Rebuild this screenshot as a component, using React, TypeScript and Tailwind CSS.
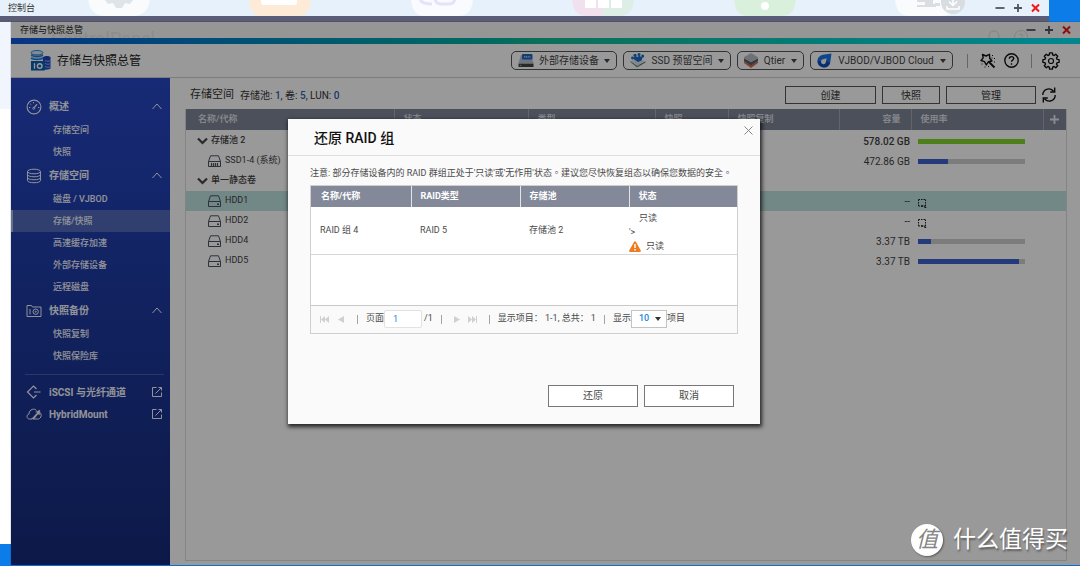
import React from 'react';

type Volume = {
  name: string;
  kind: 'group' | 'ssd' | 'hdd';
  capacity?: string;
  used?: number;
  color?: string;
  loading?: boolean;
  selected?: boolean;
};

const volumes: Volume[] = [
  { name: '存储池 2', kind: 'group', capacity: '578.02 GB', used: 100, color: '#80d62c' },
  { name: 'SSD1-4 (系统)', kind: 'ssd', capacity: '472.86 GB', used: 28, color: '#3f62cc' },
  { name: '单一静态卷', kind: 'group' },
  { name: 'HDD1', kind: 'hdd', capacity: '--', loading: true, selected: true },
  { name: 'HDD2', kind: 'hdd', capacity: '--', loading: true },
  { name: 'HDD4', kind: 'hdd', capacity: '3.37 TB', used: 12, color: '#3f62cc' },
  { name: 'HDD5', kind: 'hdd', capacity: '3.37 TB', used: 94, color: '#3f62cc' },
];

function WindowControls() {
  return (
    <div className="flex items-center gap-2">
      <button aria-label="最小化" className="text-[#50565e]">
        <svg width="10" height="10" viewBox="0 0 10 10" stroke="currentColor" strokeWidth="1.8"><path d="M0.5 5h9" /></svg>
      </button>
      <button aria-label="最大化" className="text-[#50565e]">
        <svg width="10" height="10" viewBox="0 0 10 10" stroke="currentColor" strokeWidth="1.8"><path d="M1 5h8M5 1v8" /></svg>
      </button>
      <button aria-label="关闭" className="text-[#f01818]">
        <svg width="9" height="10" viewBox="0 0 9 10" stroke="currentColor" strokeWidth="2"><path d="M1 1.5l7 7M8 1.5l-7 7" /></svg>
      </button>
    </div>
  );
}

function Caret() {
  return (
    <svg width="6" height="4" viewBox="0 0 6 4" fill="currentColor"><path d="M0 0h6L3 4z" /></svg>
  );
}

function LogoIcon() {
  return (
    <svg width="21" height="21" viewBox="0 0 21 21">
      <path d="M1 3v7h12V3z" fill="#a9cdf0" />
      <path d="M1 5c3 2 9 2 12 0M1 8c3 2 9 2 12 0" stroke="#2477d4" strokeWidth="1.4" fill="none" />
      <ellipse cx="7" cy="2.7" rx="6" ry="2.2" fill="#d5e9fa" stroke="#2d86e0" strokeWidth="1" />
      <path d="M13 7c2-1.500 6-1.500 7.500 0v11.500c-2 1.500-6 1.500-7.500 0z" fill="#2145bd" />
      <path d="M15 10.500c2 1 4 1 5.500 0M15 13.500c2 1 4 1 5.500 0M15 16.500c2 1 4 1 5.500 0" stroke="#8fb7f0" strokeWidth="1" fill="none" />
      <rect x="1" y="11" width="14" height="9.500" fill="#0d62b5" />
      <path d="M4.500 13.200v5.500" stroke="#fff" strokeWidth="1.300" />
      <circle cx="9.700" cy="16" r="2.300" fill="none" stroke="#fff" strokeWidth="1.400" />
    </svg>
  );
}

function RaidIcon() {
  return (
    <svg width="16" height="14" viewBox="0 0 16 14">
      <path d="M3 1h10l2.500 8H.5z" fill="#b8c4d2" />
      <rect x="4" y="0" width="10.500" height="5.500" rx="1" fill="#2467bd" />
      <path d="M6 2.800h6.500" stroke="#b9d5f7" strokeWidth="1.200" strokeDasharray="1.300 .5" />
      <path d="M.5 9.500h15v3.500H.5z" fill="#3e444b" />
      <circle cx="2.500" cy="11.500" r=".8" fill="#82d030" />
    </svg>
  );
}

function SsdIcon() {
  return (
    <svg width="16" height="15" viewBox="0 0 16 15">
      <path d="M.5 9L7 14.500 15.500 9.500V8.300L7 12.800.5 8z" fill="#6d7785" />
      <path d="M1 8l5-2 9.500 2L7 12.500z" fill="#d8e4ee" />
      <circle cx="2.500" cy="5" r="1.400" fill="#1c6cc4" />
      <circle cx="5" cy="2.200" r="1.500" fill="#1c6cc4" />
      <circle cx="9" cy="1.500" r="1.500" fill="#1c6cc4" />
      <circle cx="12.700" cy="3" r="1.500" fill="#1c6cc4" />
      <path d="M3 5.500L5 3l3 1 1-2 2 2 2-.5-1.500 4L8 9 5 7z" fill="#1c6cc4" />
      <path d="M7 13.500l2.500-1.300" stroke="#77cc35" strokeWidth="1" />
    </svg>
  );
}

function QtierIcon() {
  return (
    <svg width="14" height="15" viewBox="0 0 14 15">
      <path d="M0 8.500L7 12l7-3.500V10l-7 5-7-5z" fill="#e0694f" />
      <path d="M0 5.300L7 9l7-3.700v3L7 12.500 0 8.300z" fill="#59616b" />
      <path d="M0 4.300L7 0l7 4.300v1L7 9 0 5.300z" fill="#b8bec4" />
    </svg>
  );
}

function CloudDropIcon() {
  return (
    <svg width="15" height="15" viewBox="0 0 15 15">
      <path d="M14.500.5L13.300 9A6.500 6.500 0 1 1 6 1.800z" fill="#1976e8" />
      <path d="M.7 8A6.500 6.500 0 0 0 13.200 10L9 8z" fill="#124bb2" />
      <path d="M9.500 5.200l-.6 4A2.500 2.500 0 1 1 6 6.200z" fill="#f3f7fc" />
    </svg>
  );
}

const gearPath = (() => {
  const teeth = 8;
  const points: string[] = [];
  for (let i = 0; i < teeth; i++) {
    const base = (i / teeth) * Math.PI * 2 - Math.PI / 2;
    [[-0.27, 6.3], [-0.17, 8.2], [0.17, 8.2], [0.27, 6.3]].forEach(([offset, radius]) => {
      points.push(`${(9 + radius * Math.cos(base + offset)).toFixed(2)} ${(9 + radius * Math.sin(base + offset)).toFixed(2)}`);
    });
  }
  return `M${points.join('L')}Z`;
})();

function WandIcon() {
  return (
    <svg width="16" height="16" viewBox="0 0 16 16" fill="none" stroke="currentColor" strokeWidth="1.400" strokeLinejoin="round">
      <path d="M2.500 1.500L6 3l3.500-1.700.2 3.900L12 8 8.300 8.800 6.300 12 4.500 8.700 1 7.500l2.200-2.600z" />
      <path d="M9 9l5.500 5.500" strokeWidth="1.800" />
      <path d="M12 2.500h1M14 5.500h1M14 9h1M11.500 5h1M1.500 11h1M4.500 14h1M8 13.500h1" strokeWidth="1" />
    </svg>
  );
}

const tools = [
  { label: '外部存储设备', icon: <RaidIcon />, width: 'w-[106px]' },
  { label: 'SSD 预留空间', icon: <SsdIcon />, width: 'w-[108px]' },
  { label: 'Qtier', icon: <QtierIcon />, width: 'w-[67px]' },
  { label: 'VJBOD/VJBOD Cloud', icon: <CloudDropIcon />, width: 'w-[143px]' },
];

function GaugeIcon() {
  return (
    <svg width="16" height="16" viewBox="0 0 16 16" fill="none" stroke="currentColor">
      <circle cx="8" cy="8" r="6.900" strokeWidth="1.100" />
      <path d="M8.300 8.500l2.700-3.300" strokeWidth="1.200" />
      <circle cx="7.700" cy="9.300" r="1" />
      <path d="M3 8.500h1.300M4.300 5l1 .8M7.500 3v1.300M12 8.500h1.300" />
    </svg>
  );
}

function DiskStackIcon() {
  return (
    <svg width="16" height="16" viewBox="0 0 16 16" fill="none" stroke="currentColor">
      <ellipse cx="8" cy="3.500" rx="6.500" ry="2.300" />
      <path d="M1.500 3.500v9c0 3 13 3 13 0v-9M1.500 6.500c0 3 13 3 13 0M1.500 9.500c0 3 13 3 13 0" />
    </svg>
  );
}

function SnapshotIcon() {
  return (
    <svg width="16" height="14" viewBox="0 0 16 14" fill="none" stroke="currentColor">
      <path d="M1 3V1.500h4.500L6.500 3h8.500v9.500H1zM4 5v5.500" />
      <circle cx="9.700" cy="7.700" r="2.700" />
      <circle cx="9.700" cy="7.700" r=".6" />
    </svg>
  );
}

function IscsiIcon() {
  return (
    <svg width="16" height="14" viewBox="0 0 16 14" fill="none" stroke="currentColor" strokeWidth="1.200">
      <path d="M10.500 4L7.500 1 1.500 7l6 6 3-3M8 7h6.500" />
    </svg>
  );
}

function HybridIcon() {
  return (
    <svg width="16" height="12" viewBox="0 0 16 12" fill="none" stroke="currentColor">
      <path d="M6 11H3.500C.3 11 .3 6.500 3 6 3 1 9 0 10.500 2.500" />
      <path d="M12.500 3.500C15 4.500 15.800 7 14.800 9c-.7 1.600-1.800 2-3.300 2H7" />
      <path d="M5.500 11l6-6.500-2-.5 4.500-2-.5 5-1.500-1-4 5z" fill="currentColor" strokeWidth=".3" />
    </svg>
  );
}

type Group = { label: string; icon: React.ReactNode; items: string[] };

const groups: Group[] = [
  { label: '概述', icon: <GaugeIcon />, items: ['存储空间', '快照'] },
  { label: '存储空间', icon: <DiskStackIcon />, items: ['磁盘 / VJBOD', '存储/快照', '高速缓存加速', '外部存储设备', '远程磁盘'] },
  { label: '快照备份', icon: <SnapshotIcon />, items: ['快照复制', '快照保险库'] },
];

const externals = [
  { label: 'iSCSI 与光纤通道', icon: <IscsiIcon /> },
  { label: 'HybridMount', icon: <HybridIcon /> },
];

function Sidebar() {
  return (
    <nav className="w-[159px] shrink-0 bg-linear-to-b from-[#2647c4] to-[#152a78] pt-4 text-[#f4f6ff]">
      {groups.map((group) => (
        <section key={group.label}>
          <button className="flex h-[25px] w-full items-center pr-2 pl-[15px] text-[10px] font-bold">
            <span className="flex w-[23px]">{group.icon}</span>
            <span className="flex-1 text-left">{group.label}</span>
            <svg width="10" height="7" viewBox="0 0 10 7" fill="none" stroke="currentColor"><path d="M.5 6L5 1l4.500 5" /></svg>
          </button>
          {group.items.map((item) => (
            <a
              key={item}
              href="#"
              className={
                item === '存储/快照'
                  ? 'flex h-[22px] items-center border-l-2 border-[#a9b8e8] bg-[#5069bb] pt-[2px] pl-10 text-[9px] font-medium'
                  : 'flex h-[22px] items-center pt-[2px] pl-[42px] text-[9px] font-medium'
              }
            >
              {item}
            </a>
          ))}
        </section>
      ))}
      <div className="mt-[7px] mr-[6px] mb-[6px] ml-[14px] border-t border-[#4a5f9f]" />
      {externals.map((item) => (
        <a key={item.label} href="#" className="flex h-[22px] items-center pr-2 pl-[15px] text-[10px] font-bold">
          <span className="flex w-[23px]">{item.icon}</span>
          <span className="flex-1">{item.label}</span>
          <svg width="10" height="10" viewBox="0 0 10 10" fill="none" stroke="currentColor"><path d="M4.500.5h-4v9h9v-4M6.500.5h3v3M9.500.5l-6 6" /></svg>
        </a>
      ))}
    </nav>
  );
}

function RowIcon({ kind }: { kind: Volume['kind'] }) {
  if (kind === 'group') {
    return (
      <svg width="11" height="8" viewBox="0 0 11 8" fill="none" stroke="#454545" strokeWidth="2.200"><path d="M1 1.500l4.500 4.500L10 1.500" /></svg>
    );
  }
  return (
    <svg width="13" height="12" viewBox="0 0 13 12" fill="none" stroke="#4a5361">
      <path d="M.5 6.500L2.500.8h8l2 5.700v5H.5zM.5 6.500h12" />
      {kind === 'ssd' ? <path d="M3.500 8v3M5.500 8v3M7.500 8v3M9.500 8v3" strokeWidth="1.200" /> : <path d="M9 9.300h2" strokeWidth="1.600" />}
    </svg>
  );
}

function VolumeTable() {
  return (
    <table className="w-full table-fixed border-collapse text-[9px] text-[#3f3f3f]">
      <thead>
        <tr className="h-[21px] bg-[#7f8698] text-left text-[#e8eaf0]">
          <th className="w-[208px] pl-3 font-medium">名称/代称</th>
          <th className="w-[134px] border-l border-[#a4a9b6] pl-[9px] font-medium">状态</th>
          <th className="w-[127px] border-l border-[#a4a9b6] pl-[9px] font-medium">类型</th>
          <th className="w-[73px] border-l border-[#a4a9b6] pl-[9px] font-medium">快照</th>
          <th className="border-l border-[#a4a9b6] pl-[9px] font-medium">快照复制</th>
          <th className="w-[72px] border-l border-[#a4a9b6] pr-[10px] text-right font-medium">容量</th>
          <th className="w-[132px] border-l border-[#a4a9b6] pl-[9px] font-medium">使用率</th>
          <th className="w-[23px] border-l border-[#a4a9b6]">
            <button aria-label="添加列" className="flex w-full justify-center">
              <svg width="9" height="9" viewBox="0 0 9 9" stroke="currentColor" strokeWidth="1.800"><path d="M0 4.500h9M4.500 0v9" /></svg>
            </button>
          </th>
        </tr>
      </thead>
      <tbody className="before:block before:h-px">
        {volumes.map((v) => (
          <tr key={v.name} className={v.selected ? 'h-5 bg-[#bde3e0]' : 'h-5'}>
            <td className="whitespace-nowrap">
              <span className={v.kind === 'group' ? 'flex items-center gap-[3px] pl-[11px] font-medium' : 'flex items-center gap-1 pl-[22px]'}>
                <RowIcon kind={v.kind} />
                {v.name}
              </span>
            </td>
            <td />
            <td />
            <td />
            <td />
            <td className={v.kind === 'group' ? 'text-right text-[10px] font-medium whitespace-nowrap' : 'text-right text-[10px] whitespace-nowrap'}>
              <span className="pr-px">{v.capacity}</span>
            </td>
            <td className="pr-[18px] pl-[7px]">
              {v.used !== undefined && (
                <div className="h-[5px] bg-[#cfcfcf]">
                  <div className="h-full" style={{ width: `${v.used}%`, backgroundColor: v.color }} />
                </div>
              )}
              {v.loading && (
                <svg className="mt-1" width="9" height="9" viewBox="0 0 9 9" stroke="#222">
                  <path d="M.5.5h7M.5 7h7M.5.5v7M7.500.5v7" fill="none" strokeDasharray="1.500 1" />
                  <path d="M3 7h2M6.500 7.500L8 9" strokeWidth="1.500" />
                </svg>
              )}
            </td>
            <td />
          </tr>
        ))}
      </tbody>
    </table>
  );
}

function PagerDivider() {
  return <span className="h-[9px] w-px bg-[#a9a497]" />;
}

function RestoreDialog() {
  return (
    <div
      role="dialog"
      aria-labelledby="restore-title"
      className="absolute top-[97px] left-[277px] flex w-[472px] flex-col bg-[#fafafa] pb-[17px] text-[9px] text-[#4a4a4a] shadow-[1px_2px_4px_1px_rgba(0,0,0,0.75)]"
    >
      <header className="flex h-[37px] items-center justify-between border-b border-[#dedede] pr-[7px] pl-[26px]">
        <h2 id="restore-title" className="pt-[2px] text-[14px] font-medium text-[#111]">还原 RAID 组</h2>
        <button aria-label="关闭对话框" className="self-start pt-[7px]">
          <svg width="9" height="9" viewBox="0 0 9 9" stroke="#858585"><path d="M.5.5l8 8M8.500.5l-8 8" /></svg>
        </button>
      </header>
      <div className="px-[22px]">
        <p className="flex h-[29px] items-center pt-[7px] font-[Roboto,'Noto_Sans_CJK_TC',sans-serif] whitespace-nowrap">
          注意: 部分存储设备内的 RAID 群组正处于'只读'或'无作用'状态。建议您尽快恢复组态以确保您数据的安全。
        </p>
        <div className="border border-[#cfcfcf] bg-white">
          <table className="w-full table-fixed border-collapse">
            <thead>
              <tr className="h-[21px] bg-[#838999] text-left text-white">
                <th className="w-[100px] pl-[10px] font-bold">名称/代称</th>
                <th className="w-[109px] border-l border-[#e2e4e8] pl-[9px] font-bold">RAID类型</th>
                <th className="w-[109px] border-l border-[#e2e4e8] pl-[9px] font-bold">存储池</th>
                <th className="border-l border-[#e2e4e8] pl-[9px] font-bold">状态</th>
              </tr>
            </thead>
            <tbody>
              <tr className="h-[47px] border-b border-[#d6d6d6]">
                <td className="pl-[9px]">RAID 组 4</td>
                <td className="pl-[9px]">RAID 5</td>
                <td className="pl-[9px]">存储池 2</td>
                <td className="pt-1 leading-[14px]">
                  <div className="pl-[10px]">只读</div>
                  <div>'&gt;</div>
                  <div className="flex items-center gap-[5px]">
                    <svg width="12" height="11" viewBox="0 0 12 11"><path d="M6 .3c.5 0 .8.200 1 .6l4.800 8.600c.4.8 0 1.400-.8 1.400H1c-.8 0-1.200-.6-.8-1.400L5 .9c.2-.4.5-.6 1-.6z" fill="#ee7b1d" /><path d="M6 3v4M6 8v1.500" stroke="#fff" strokeWidth="1.500" /></svg>
                    只读
                  </div>
                </td>
              </tr>
            </tbody>
          </table>
          <div className="h-[50px]" />
          <div className="flex h-7 items-center border-t border-[#c9c9c9] bg-[#fafafa] pl-[9px] whitespace-nowrap">
            <div className="flex items-center gap-[9px] pr-2 text-[#d0d0d0]">
              <button aria-label="第一页"><svg width="9" height="7" viewBox="0 0 9 7" fill="currentColor"><path d="M0 0h1v7H0zM5 0v7L1 3.500zM9 0v7L5 3.500z" /></svg></button>
              <button aria-label="上一页" className="pr-1"><svg width="6" height="7" viewBox="0 0 6 7" fill="currentColor"><path d="M6 0v7L0 3.500z" /></svg></button>
              <PagerDivider />
            </div>
            <label htmlFor="page">页面</label>
            <input id="page" defaultValue="1" className="h-[18px] w-[38px] rounded-[2px] border border-[#e2e2e2] bg-white pl-2 text-[9px] text-[#1c86d8]" />
            <span className="pr-2 pl-[2px]">/1</span>
            <div className="flex items-center gap-2 pr-2 text-[#d0d0d0]">
              <PagerDivider />
              <button aria-label="下一页" className="pl-1"><svg width="6" height="7" viewBox="0 0 6 7" fill="currentColor"><path d="M0 0v7l6-3.500z" /></svg></button>
              <button aria-label="最后一页" className="pr-1"><svg width="9" height="7" viewBox="0 0 9 7" fill="currentColor"><path d="M8 0h1v7H8zM0 0v7l4-3.500zM4 0v7l4-3.500z" /></svg></button>
              <PagerDivider />
            </div>
            <span className="pr-2">显示项目： 1-1, 总共： 1</span>
            <PagerDivider />
            <label htmlFor="size" className="pl-2">显示</label>
            <span className="relative flex items-center">
              <select id="size" defaultValue="10" className="h-[18px] w-9 appearance-none border border-[#c4c4c4] bg-white pl-[7px] text-[9px] font-medium text-[#1c86d8]">
                <option>10</option>
                <option>20</option>
              </select>
              <span className="pointer-events-none absolute right-[6px] text-[#333]"><Caret /></span>
            </span>
            <span>项目</span>
          </div>
        </div>
      </div>
      <footer className="mt-[51px] flex justify-end gap-[6px] pr-[26px]">
        <button className="h-[22px] w-[90px] border border-[#777] bg-white text-[10px]">还原</button>
        <button className="h-[22px] w-[90px] border border-[#777] bg-white text-[10px]">取消</button>
      </footer>
    </div>
  );
}

function ControlPanelWindow() {
  return (
    <div className="absolute top-0 right-[31px] bottom-[22px] left-0 flex flex-col bg-white">
      <div className="relative h-4 overflow-hidden bg-[#e6f1fb]">
        <div className="flex justify-between pr-[82px] pl-[88px]">
          <svg width="62" height="16" viewBox="0 0 62 16">
            <path d="M0-15h62V-4Q62 16 44 16H18Q0 16 0-4z" fill="#f9fbfc" />
            <path d="M17 0h28l-3 4-5-1-3 5h-6l-3-5-5 1z" fill="#dfe4e9" />
          </svg>
          <svg width="62" height="16" viewBox="0 0 62 16">
            <path d="M0-15h62V-4Q62 16 50 16H12Q0 16 0-4z" fill="#fdebd8" />
            <rect x="12" y="-8" width="36" height="13" rx="3" fill="#fff" />
          </svg>
          <svg width="62" height="16" viewBox="0 0 62 16">
            <path d="M0-15h62V-4Q62 16 48 16H14Q0 16 0-4z" fill="#fafbff" />
            <path d="M9 0q3 4 12 4M24-2q0 6 7 6h6q7 0 7-6" stroke="#e5e3fa" strokeWidth="3" fill="none" />
          </svg>
          <svg width="62" height="16" viewBox="0 0 62 16">
            <path d="M0-15h31v31H14Q0 16 0-4z" fill="#f1e1ef" />
            <path d="M31-15h31V-4Q62 16 48 16H31z" fill="#dceee6" />
            <path d="M13-4h11V8H13zM26-4h11V8H26zM39-4h11V8H39z" fill="#fff" />
          </svg>
          <svg width="62" height="16" viewBox="0 0 62 16">
            <path d="M0-15h62V-4Q62 16 48 16H14Q0 16 0-4z" fill="#d9f0dc" />
            <circle cx="31" cy="6" r="4" fill="#fff" />
          </svg>
          <svg width="72" height="16" viewBox="0 0 72 16">
            <path d="M0-15h62V-4Q62 16 48 16H14Q0 16 0-4z" fill="#f9fbfc" />
            <path d="M22-2h16V4h3v3H22V5h8V2h-8zM40 3h5v3h-5z" fill="#dadee2" />
            <circle cx="58" cy="2" r="12" fill="#d8dde2" />
            <path d="M58-4v9M54 1.500l4 4 4-4M52 6v3h12V6" stroke="#fff" strokeWidth="1.500" fill="none" />
          </svg>
        </div>
        <span className="absolute top-[2px] left-2 text-[9px] leading-[13px] text-[#333]">控制台</span>
        <div className="absolute top-[3px] right-[9px]"><WindowControls /></div>
      </div>
      <div className="h-[6px] bg-[#5b5c76]" />
      <div className="h-[87px] bg-[#f1f6fe]" />
    </div>
  );
}

export default function App() {
  return (
    <div className="relative h-screen w-full overflow-hidden bg-[#0b7ce8] font-[Roboto,'Noto_Sans_CJK_SC',sans-serif]">
      <ControlPanelWindow />
      <main className="absolute top-[22px] right-0 bottom-px left-[11px] flex flex-col overflow-hidden bg-white shadow-[0_0_1px_rgba(0,0,0,0.6)]">
        <div className="relative flex h-4 shrink-0 items-center justify-between overflow-hidden bg-[#fafafa] pr-[9px] pl-[9px] text-[9px] text-[#222]">
          <span aria-hidden="true" className="absolute top-[8px] left-10 text-[18px] leading-[18px] text-[#ebebeb]"><b className="font-medium">Control</b>Panel</span>
          <svg className="absolute right-[50px] bottom-0" width="42" height="8" viewBox="0 0 42 8" fill="none" stroke="#dcdcdc"><circle cx="6" cy="6" r="5" /><circle cx="33" cy="7" r="6.500" /><path d="M31 5q2-2 4 0l-2 3" /></svg>
          <span className="relative pt-[2px]">存储与快照总管</span>
          <div className="relative"><WindowControls /></div>
        </div>
        <div className="h-[6px] shrink-0 bg-linear-to-r from-[#1355dd] via-[#14ba96] to-[#00e2f2]" />
        <header className="flex h-[34px] shrink-0 items-center border-b border-[#d0d0d0] pr-[20px] pl-[19px]">
          <LogoIcon />
          <h1 className="flex-1 pl-[6px] text-[12px] text-[#222]">存储与快照总管</h1>
          <div className="flex gap-[6px] text-[#444]">
            {tools.map((t) => (
              <button key={t.label} className={`${t.width} flex h-[19px] items-center justify-between rounded-[5px] border border-[#555] pr-[6px] pl-[6px] text-[10px] whitespace-nowrap`}>
                {t.icon}
                <span>{t.label}</span>
                <Caret />
              </button>
            ))}
          </div>
          <div className="flex items-center pl-[14px] text-[#111]">
            <span className="h-[14px] w-px bg-[#aaa]" />
            <button aria-label="工具" className="pl-3"><WandIcon /></button>
            <button aria-label="帮助" className="pl-2">
              <svg width="15" height="15" viewBox="0 0 15 15" fill="none" stroke="currentColor" strokeWidth="1.400"><circle cx="7.500" cy="7.500" r="6.700" /><path d="M5.300 5.800c0-3 4.400-2.800 4.400-.2 0 1.600-2.200 1.500-2.200 3.200M7.500 10.200v1.500" /></svg>
            </button>
            <span className="ml-3 h-[14px] w-px bg-[#aaa]" />
            <button aria-label="设置" className="pl-[10px]">
              <svg width="18" height="18" viewBox="0 0 18 18" fill="none" stroke="currentColor" strokeWidth="1.400" strokeLinejoin="round">
                <path d={gearPath} />
                <circle cx="9" cy="9" r="2.500" strokeWidth="1.200" />
              </svg>
            </button>
          </div>
        </header>
        <div className="flex min-h-0 flex-1">
          <Sidebar />
          <div className="flex min-w-0 flex-1 flex-col pr-[13px] pb-1 pl-[15px]">
            <div className="flex h-[31px] shrink-0 items-center gap-[6px] pt-[3px] pr-[11px] pl-[5px] text-[#333]">
              <h2 className="text-[11px]">存储空间</h2>
              <p className="flex-1 text-[10px]">
                存储池: <b className="font-medium text-[#2a5fae]">1</b>, 卷: <b className="font-medium text-[#2a5fae]">5</b>, LUN: <b className="font-medium text-[#2a5fae]">0</b>
              </p>
              <button className="h-[18px] w-[91px] border border-[#555] text-[10px]">创建</button>
              <button className="h-[18px] w-[58px] border border-[#555] text-[10px]">快照</button>
              <button className="h-[18px] w-[90px] border border-[#555] text-[10px]">管理</button>
              <button aria-label="刷新">
                <svg width="14" height="16" viewBox="0 0 14 16" fill="none" stroke="#111" strokeWidth="1.400"><path d="M.8 8C.8 2.500 7-.3 11.500 4M12.700.5v4.500H8.200M13.200 8c0 5.500-6.200 8.300-10.700 4M1.300 15.500V11h4.500" /></svg>
              </button>
            </div>
            <div className="flex-1 border border-t-0 border-[#dcdcdc]">
              <VolumeTable />
            </div>
          </div>
        </div>
        <div className="absolute inset-0 bg-black/40" />
        <RestoreDialog />
      </main>
      <div className="absolute right-3 bottom-[9px] flex items-center gap-[10px] text-white">
        <span className="flex h-8 w-8 items-center justify-center rounded-full bg-white text-[22px] leading-none text-[#858585] italic shadow-[1px_1px_2px_rgba(0,0,0,0.4)]">值</span>
        <span className="text-[23px] leading-[34px] text-shadow-[1px_2px_2px_rgba(0,0,0,0.4)]">什么值得买</span>
      </div>
    </div>
  );
}
